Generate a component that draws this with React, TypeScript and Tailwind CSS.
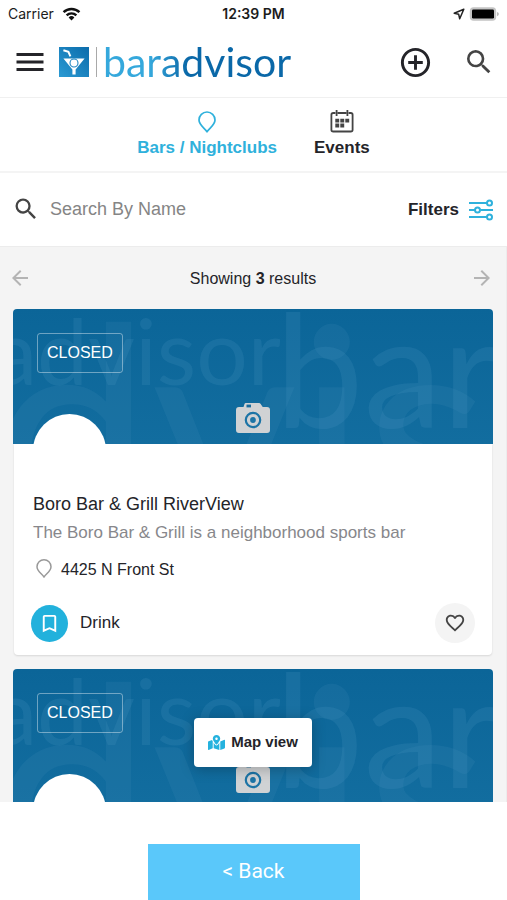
import {
  MdAddCircleOutline,
  MdArrowBack,
  MdArrowForward,
  MdBookmarkBorder,
  MdFavoriteBorder,
  MdMenu,
  MdSearch,
} from "react-icons/md";
import { FaMapMarkedAlt } from "react-icons/fa";

type Listing = {
  id: number;
  name: string;
  tagline: string;
  address: string;
  category: string;
  status: string;
};

const listings: Listing[] = [
  {
    id: 1,
    name: "Boro Bar & Grill RiverView",
    tagline: "The Boro Bar & Grill is a neighborhood sports bar",
    address: "4425 N Front St",
    category: "Drink",
    status: "CLOSED",
  },
  {
    id: 2,
    name: "Boro Bar & Grill RiverView",
    tagline: "The Boro Bar & Grill is a neighborhood sports bar",
    address: "4425 N Front St",
    category: "Drink",
    status: "CLOSED",
  },
];

export default function App() {
  return (
    <div className="flex h-screen flex-col overflow-hidden bg-white font-['Liberation_Sans',Arial,sans-serif] text-[#242429]">
      <StatusBar />
      <Header />
      <Tabs />
      <SearchBar />
      <main className="relative min-h-0 flex-1 overflow-hidden border-t border-r border-[#ececec] bg-[#f4f4f4]">
        <Pagination />
        <div className="flex flex-col gap-3.5 px-[13px]">
          {listings.map((listing) => (
            <ListingCard key={listing.id} listing={listing} />
          ))}
        </div>
        <button className="absolute bottom-[35px] left-1/2 flex h-[49px] w-[118px] -translate-x-1/2 items-center justify-center gap-1.5 rounded bg-white text-[15px] font-bold whitespace-nowrap shadow-[0_2px_14px_rgba(0,0,0,0.25)]">
          <FaMapMarkedAlt className="size-[17px] text-[#25b2de]" />
          Map view
        </button>
      </main>
      <footer className="flex justify-center pt-[42px]">
        <button className="h-14 w-[212px] bg-[#5ac8fa] font-[Roboto,sans-serif] text-[21px] text-white">
          &lt; Back
        </button>
      </footer>
    </div>
  );
}

function StatusBar() {
  return (
    <div className="grid h-[27px] shrink-0 grid-cols-3 items-center px-2 font-[Inter,sans-serif] text-sm text-[#1c1c1c]">
      <div className="flex items-center gap-2">
        Carrier
        <svg viewBox="0 0 20 15" className="h-[14px] w-[19px]" aria-hidden="true">
          <g fill="none" stroke="#111" strokeWidth="2.6">
            <path d="M1.5 5.6a12 12 0 0 1 17 0" />
            <path d="M4.8 9a7.4 7.4 0 0 1 10.4 0" />
          </g>
          <path d="M10 14.4 6.9 11.2a4.4 4.4 0 0 1 6.2 0z" fill="#111" />
        </svg>
      </div>
      <div className="text-center font-semibold whitespace-nowrap">12:39 PM</div>
      <div className="flex items-center justify-end gap-1">
        <svg viewBox="0 0 12 12" className="size-3" aria-hidden="true">
          <path
            d="M10.8 1.2 1.2 5.3l4.5 1 1 4.5z"
            fill="none"
            stroke="#222"
            strokeWidth="1.5"
            strokeLinejoin="round"
          />
        </svg>
        <svg viewBox="0 0 30 14" className="h-[14px] w-[30px]" aria-hidden="true">
          <rect x="0.8" y="0.2" width="26.4" height="13.6" rx="3.8" fill="#c4c4c4" />
          <rect x="3" y="2.4" width="22" height="9.2" rx="1.4" fill="#000" />
          <path d="M28.2 5v4.2a2.2 2.2 0 0 0 0-4.2z" fill="#aaa" />
        </svg>
      </div>
    </div>
  );
}

function Header() {
  return (
    <header className="flex h-[71px] shrink-0 items-center border-b border-[#f0f0f0] px-3">
      <button aria-label="Menu">
        <MdMenu className="size-9" />
      </button>
      <a href="#" aria-label="baradvisor" className="ml-[11px] flex items-center">
        <LogoMark />
        <span className="ml-[7px] h-[30px] w-px bg-[#a9a9a9]" />
        <span className="ml-1.5 bg-linear-to-r from-[#35a8dc] from-25% to-[#0a68a8] to-45% bg-clip-text font-[Lato,sans-serif] text-[41px] leading-[44px] text-transparent">
          baradvisor
        </span>
      </a>
      <div className="ml-auto flex items-center gap-[30px]">
        <button aria-label="Add listing">
          <MdAddCircleOutline className="size-[35px]" />
        </button>
        <button aria-label="Search">
          <MdSearch className="size-8 text-[#444]" />
        </button>
      </div>
    </header>
  );
}

function LogoMark() {
  return (
    <svg viewBox="0 0 30 30" className="size-[30px]" aria-hidden="true">
      <defs>
        <linearGradient id="mark" x1="0" y1="1" x2="1" y2="0">
          <stop offset="0" stopColor="#2b9ad3" />
          <stop offset="1" stopColor="#0b6cab" />
        </linearGradient>
      </defs>
      <rect width="30" height="30" fill="url(#mark)" />
      <path d="M4.4 3.2 9.4 4.8 11.4 9.4" fill="none" stroke="#fff" strokeWidth="2" />
      <path d="M4.4 11.6h21.2L16.6 22.4V27.4h-3.2V22.4z" fill="#fff" />
      <circle cx="15" cy="16" r="4" fill="#fff" stroke="#1f86c3" strokeWidth="1.1" />
    </svg>
  );
}

function Tabs() {
  return (
    <nav className="flex h-[75px] shrink-0 justify-center gap-[37px] border-b-2 border-[#f4f4f4] pt-3 text-[17px] leading-6 font-bold">
      <a href="#" className="flex flex-col items-center gap-0.5 text-[#2fb1dc]">
        <Pin className="h-6 w-5" />
        Bars / Nightclubs
      </a>
      <a href="#" className="flex flex-col items-center gap-0.5">
        <svg viewBox="0 0 24 24" className="size-6" aria-hidden="true">
          <g fill="none" stroke="#444" strokeWidth="1.8">
            <path d="M5.5 3H3.2A1.8 1.8 0 0 0 1.4 4.8v14.9a1.8 1.8 0 0 0 1.8 1.8h17.6a1.8 1.8 0 0 0 1.8-1.8V4.8A1.8 1.8 0 0 0 20.8 3h-2.3M7.4 3h9.2" />
            <path d="M6.6 0v6M17.4 0v6" />
          </g>
          <path
            d="M10.3 8.7h3.9v3.7h-3.9zM15.3 8.7h3.9v3.7h-3.9zM5.3 8.7h3.9v3.7H5.3zM5.3 13.6h3.9v3.9H5.3zM10.3 13.6h3.9v3.9h-3.9z"
            fill="#444"
          />
        </svg>
        Events
      </a>
    </nav>
  );
}

function Pin({ className }: { className: string }) {
  return (
    <svg viewBox="0 0 20 24" className={className} aria-hidden="true">
      <path
        d="M10 21.8C8 18.2 2 15.2 2 10a8 8 0 0 1 16 0c0 5.2-6 8.2-8 11.8z"
        fill="none"
        stroke="currentColor"
        strokeWidth="1.7"
        strokeLinejoin="round"
      />
    </svg>
  );
}

function SearchBar() {
  return (
    <div className="flex h-[73px] shrink-0 items-center px-3 pb-0.5">
      <label htmlFor="name">
        <MdSearch className="size-7 text-[#444]" />
        <span className="sr-only">Search By Name</span>
      </label>
      <input
        id="name"
        type="text"
        placeholder="Search By Name"
        className="ml-2.5 min-w-0 flex-1 text-lg outline-none placeholder:text-[#858585]"
      />
      <button className="flex items-center gap-2.5 pt-0.5 pr-0.5 text-[17px] font-bold">
        Filters
        <svg viewBox="0 0 24 22" className="h-[22px] w-6" aria-hidden="true">
          <g fill="none" stroke="#2fb1dc" strokeWidth="2">
            <path d="M0 4h18M0 11h6M11.5 11H24M0 18h18" />
            <circle cx="20.5" cy="4" r="2.5" />
            <circle cx="8.5" cy="11" r="2.5" />
            <circle cx="20.5" cy="18" r="2.5" />
          </g>
        </svg>
      </button>
    </div>
  );
}

function Pagination() {
  return (
    <div className="flex h-[62px] items-center justify-between px-2">
      <button aria-label="Previous page">
        <MdArrowBack className="size-6 text-[#b4b4b4]" />
      </button>
      <p className="pt-0.5 pl-1 text-base">
        Showing <b>3</b> results
      </p>
      <button aria-label="Next page" className="pr-1">
        <MdArrowForward className="size-6 text-[#b4b4b4]" />
      </button>
    </div>
  );
}

function ListingCard({ listing }: { listing: Listing }) {
  return (
    <article className="shrink-0">
      <div className="relative h-[135px] overflow-hidden rounded-t bg-linear-to-b from-[#0b6598] to-[#126d9f]">
        <CoverPattern />
        <span className="absolute top-6 left-6 rounded-[3px] border border-white/40 px-[9px] py-[7px] text-base leading-6 text-white">
          {listing.status}
        </span>
        <div className="absolute top-[105px] left-5 size-[73px] rounded-full bg-white" />
        <Camera />
      </div>
      <div className="mx-px rounded-b-sm bg-white pt-[47px] pr-[17px] pb-3 pl-[19px] shadow-[0_1px_2px_rgba(0,0,0,0.12)]">
        <h2 className="text-lg leading-[26px]">{listing.name}</h2>
        <p className="text-[17px] leading-8 text-[#87878b]">{listing.tagline}</p>
        <p className="flex items-center gap-2 pt-2 pl-0.5 text-base leading-[26px]">
          <Pin className="-mt-1 h-[21px] w-[18px] text-[#999]" />
          {listing.address}
        </p>
        <div className="flex items-center justify-between pt-5">
          <a href="#" className="flex items-center gap-3 text-[17px]">
            <span className="-ml-0.5 flex size-[37px] items-center justify-center rounded-full bg-[#22b1dc] text-white">
              <MdBookmarkBorder className="size-[23px]" />
            </span>
            {listing.category}
          </a>
          <button
            aria-label="Add to favorites"
            className="flex size-10 items-center justify-center rounded-full bg-[#f4f4f4]"
          >
            <MdFavoriteBorder className="size-[22px] text-[#444]" />
          </button>
        </div>
      </div>
    </article>
  );
}

// Oversized, overlapping brand name behind the cover
function CoverPattern() {
  return (
    <svg
      viewBox="0 0 480 135"
      preserveAspectRatio="xMidYMid slice"
      className="absolute inset-0 size-full font-[Lato,sans-serif]"
      aria-hidden="true"
    >
      <g fill="#5aa0c8" fillOpacity="0.17">
        <text x="268" y="76" fontSize="91" textAnchor="end">
          advisor
        </text>
        <text x="262" y="119" fontSize="158">
          bar
        </text>
        <text x="-162" y="222" fontSize="284" fillOpacity="0.12">
          advis
        </text>
      </g>
    </svg>
  );
}

function Camera() {
  return (
    <svg
      viewBox="0 0 34 30"
      className="absolute bottom-[11px] left-1/2 h-[30px] w-[34px] -translate-x-1/2"
      aria-hidden="true"
    >
      <path
        d="M3 4h4.5l1-3a1.5 1.5 0 0 1 1.5-1h13a2 2 0 0 1 1.7 1l2 3H31a3 3 0 0 1 3 3v20a3 3 0 0 1-3 3H3a3 3 0 0 1-3-3V7a3 3 0 0 1 3-3z"
        fill="#d0d2d4"
      />
      <rect x="10.5" y="1.6" width="4.5" height="2.8" fill="#1a6c9d" />
      <circle cx="17" cy="17" r="7.2" fill="none" stroke="#1c74a6" strokeWidth="2.2" />
      <circle cx="17" cy="17" r="2.9" fill="#1c74a6" />
    </svg>
  );
}
